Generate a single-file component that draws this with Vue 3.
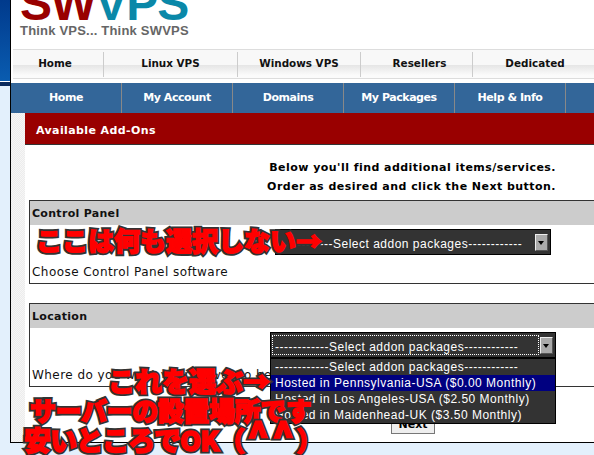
<script setup>
const topLinks = ["Home", "Linux VPS", "Windows VPS", "Resellers", "Dedicated"];
const mainLinks = ["Home", "My Account", "Domains", "My Packages", "Help & Info", ""];
const options = [
  "Hosted in Pennsylvania-USA ($0.00 Monthly)",
  "Hosted in Los Angeles-USA ($2.50 Monthly)",
  "Hosted in Maidenhead-UK ($3.50 Monthly)",
];
const placeholder = "------------Select addon packages------------";
const notes = [
  { cls: "n1", text: "ここは何も選択しない→" },
  { cls: "n2", text: "これを選ぶ→" },
  { cls: "n3", text: "サーバーの設置場所です" },
  { cls: "n4", text: "安いところでOK（　　）" },
  { cls: "n5", text: "^^" },
];
</script>

<template>
  <div class="page">
    <div class="side">
      <div class="side-top"></div>
      <div class="side-line"></div>
    </div>
    <div class="main">
      <header class="logo">
        <div class="logo-mark"><span class="red">SW</span><span class="teal">VPS</span></div>
        <div class="logo-tag">Think VPS... Think SWVPS</div>
      </header>

      <nav class="top-nav">
        <a v-for="link in topLinks" :key="link">{{ link }}</a>
      </nav>

      <nav class="main-nav">
        <a v-for="(link, i) in mainLinks" :key="i">{{ link }}</a>
      </nav>

      <div class="body">
        <div class="gutter"></div>
        <div class="content">
          <h1 class="title">Available Add-Ons</h1>
          <p class="intro">
            Below you'll find additional items/services.<br />
            Order as desired and click the Next button.
          </p>

          <section class="box">
            <h2>Control Panel</h2>
            <div class="row">
              <div class="select first">
                <span>{{ placeholder }}</span>
                <i class="arrow"></i>
              </div>
            </div>
            <p class="hint">Choose Control Panel software</p>
          </section>

          <section class="box second">
            <h2>Location</h2>
            <div class="row open">
              <div class="select-wrap">
                <div class="select focus">
                  <span>{{ placeholder }}</span>
                  <i class="arrow"></i>
                </div>
                <ul class="menu">
                  <li>{{ placeholder }}</li>
                  <li v-for="(opt, i) in options" :key="opt" :class="{ active: i === 0 }">{{ opt }}</li>
                </ul>
              </div>
            </div>
            <p class="hint">Where do you want your server to be located?</p>
          </section>

          <div class="actions"><button>Next</button></div>
        </div>
      </div>
    </div>

    <div v-for="note in notes" :key="note.cls" class="note" :class="note.cls" :data-t="note.text">{{ note.text }}</div>
  </div>
</template>

<style scoped>
.page {
  position: relative;
  width: 594px;
  height: 455px;
  overflow: hidden;
  display: flex;
  align-items: flex-start;
  background: #e3f0fc;
  font-family: "DejaVu Sans", Verdana, sans-serif;
}

.side {
  width: 10px;
  flex: none;
}

.side-top {
  height: 81px;
  background: linear-gradient(#003a8c, #0a5cb0);
}

.side-line {
  height: 4px;
  border-top: 1px solid #fff;
  background: #0a2a5c;
}

.main {
  width: 584px;
  height: 443px;
  flex: none;
  box-sizing: border-box;
  border-left: 1px solid #000;
  border-bottom: 1px solid #000;
  background: #fff;
  display: flex;
  flex-direction: column;
  overflow: hidden;
}

.logo {
  height: 49px;
  flex: none;
  padding-left: 9px;
  overflow: hidden;
}

.logo-mark {
  height: 22px;
  display: flex;
  align-items: flex-end;
  font: bold 48px/1 "Liberation Sans", Arial, sans-serif;
  letter-spacing: -1px;
}

.logo-mark span {
  display: block;
  margin-bottom: -6px;
}

.red {
  color: #990000;
}

.teal {
  color: #0a88a8;
}

.logo-tag {
  margin-top: 2px;
  font: bold 13px/14px "Liberation Sans", Arial, sans-serif;
  color: #666;
  letter-spacing: 0.2px;
}

.top-nav {
  height: 30px;
  flex: none;
  display: flex;
  align-items: center;
  border-top: 1px solid #ddd;
  border-bottom: 1px solid #ddd;
  margin-left: 2px;
  box-sizing: border-box;
  background: linear-gradient(#f8f8f8 0 52%, #e4e4e4 52%, #fbfbfb 90%);
}

.top-nav a {
  height: 25px;
  box-sizing: border-box;
  padding-bottom: 3px;
  display: flex;
  align-items: center;
  justify-content: center;
  border-right: 1px solid #ccc;
  font-size: 10.4px;
  font-weight: bold;
  color: #111;
}

.top-nav a:nth-child(1) { width: 91px; padding-right: 6px; }
.top-nav a:nth-child(2) { width: 134px; }
.top-nav a:nth-child(3) { width: 123px; }
.top-nav a:nth-child(4) { width: 112px; padding-left: 6px; }
.top-nav a:nth-child(5) { width: 120px; padding-left: 4px; border-right: 0; }

.main-nav {
  height: 30px;
  flex: none;
  margin-top: 4px;
  display: flex;
  background: #336699;
}

.main-nav a {
  width: 111px;
  flex: none;
  box-sizing: border-box;
  padding-bottom: 2px;
  border-right: 1px solid #888;
  display: flex;
  align-items: center;
  justify-content: center;
  font-size: 11px;
  font-weight: bold;
  letter-spacing: -0.45px;
  color: #fff;
}

.body {
  flex: 1;
  display: flex;
  min-height: 0;
}

.gutter {
  width: 14px;
  flex: none;
  background: repeating-conic-gradient(#ececec 0 25%, #f6f6f6 0 50%) 0 0 / 2px 2px;
}

.content {
  flex: 1;
  min-width: 0;
}

.title {
  margin: 0;
  height: 32px;
  box-sizing: border-box;
  padding-left: 11px;
  border-bottom: 1px solid #333;
  background: #990000;
  color: #fff;
  font-size: 11px;
  font-weight: bold;
  line-height: 35px;
  letter-spacing: 0.4px;
}

.intro {
  margin: 13px 38px 0 0;
  text-align: right;
  font-size: 11px;
  font-weight: bold;
  line-height: 19px;
  letter-spacing: 0.46px;
  color: #000;
}

.box {
  margin: 4px -10px 0 4px;
  height: 84px;
  box-sizing: border-box;
  border: 1px solid #333;
  display: flex;
  flex-direction: column;
}

.box.second {
  margin-top: 19px;
}

.box h2 {
  margin: 0;
  height: 24px;
  flex: none;
  padding-left: 2px;
  background: #ccc;
  color: #111;
  font-size: 11px;
  font-weight: bold;
  line-height: 26px;
  letter-spacing: 0.3px;
}

.row {
  height: 26px;
  flex: none;
  margin-top: 4px;
  padding-left: 245px;
}

.row.open {
  padding-left: 240px;
}

.select {
  box-sizing: border-box;
  height: 26px;
  width: 276px;
  display: flex;
  align-items: center;
  justify-content: space-between;
  border: 1px solid #000;
  background: #333;
  color: #fff;
  font-family: "Liberation Sans", Arial, sans-serif;
  font-size: 12px;
  letter-spacing: 0.5px;
  white-space: nowrap;
  padding: 0 2px 0 3px;
  overflow: hidden;
}

.select span {
  flex: 1;
  min-width: 0;
  overflow: hidden;
  line-height: 18px;
  padding-top: 3px;
  box-sizing: border-box;
  height: 20px;
}

.select.focus {
  width: 286px;
  padding-left: 1px;
}

.select.focus span {
  border: 1px dotted #fff;
  margin-right: 1px;
  padding: 2px 0 0 2px;
}

.arrow {
  position: relative;
  flex: none;
  width: 13px;
  height: 17px;
  box-sizing: border-box;
  border: 1px solid;
  border-color: #eee #555 #555 #eee;
  background: #aaa;
}

.arrow::after {
  content: "";
  position: absolute;
  left: 2px;
  top: 6px;
  border: 3.5px solid transparent;
  border-top: 4px solid #000;
  border-bottom: 0;
}

.select-wrap {
  position: relative;
  width: 286px;
}

.menu {
  position: absolute;
  z-index: 2;
  top: 26px;
  left: 0;
  width: 100%;
  box-sizing: border-box;
  margin: 0;
  padding: 0;
  list-style: none;
  border: 1px solid #000;
  background: #333;
  color: #fff;
  font-family: "Liberation Sans", Arial, sans-serif;
  font-size: 12px;
  letter-spacing: 0.5px;
  line-height: 16px;
  white-space: nowrap;
  overflow: hidden;
}

.menu li {
  padding-left: 4px;
  height: 16px;
}

.menu li.active {
  background: #000080;
}

.hint {
  margin: 10px 0 0 2px;
  font-size: 12px;
  letter-spacing: 0.45px;
  line-height: 15px;
  color: #111;
  white-space: nowrap;
}

.actions {
  margin-top: 23px;
  padding-left: 366px;
}

.actions button {
  display: block;
  width: 44px;
  height: 24px;
  box-sizing: border-box;
  padding: 4px 0 0;
  border: 1px solid #777;
  background: #eee;
  font-family: inherit;
  font-size: 11px;
  font-weight: bold;
  color: #000;
}

.note {
  position: absolute;
  z-index: 3;
  white-space: nowrap;
  font-family: "Noto Sans CJK JP", sans-serif;
  font-weight: 900;
  color: #f00;
  -webkit-text-stroke: 1.4px #f00;
  line-height: 1;
}

.note::before {
  content: attr(data-t);
  position: absolute;
  left: 0;
  top: 0;
  z-index: -1;
  color: #333;
  -webkit-text-stroke: 5px #333;
}

.n1 { left: 36px; top: 227px; font-size: 26px; }
.n2 { left: 108px; top: 367px; font-size: 27px; }
.n3 { left: 30px; top: 397px; font-size: 26px; letter-spacing: -0.4px; }
.n4 { left: 24px; top: 426px; font-size: 27px; letter-spacing: -1px; }
.n5 { left: 247px; top: 415px; font-size: 36px; letter-spacing: 3px; }
</style>

<style>
body {
  margin: 0;
}
</style>
